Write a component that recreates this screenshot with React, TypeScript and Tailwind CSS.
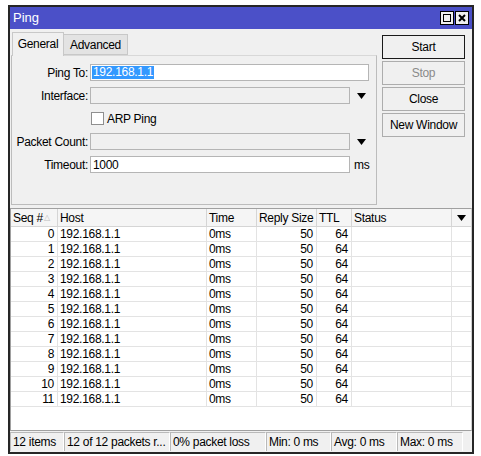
import React from 'react';

const font = { fontFamily: '"Liberation Sans", Arial, sans-serif' };

const rows = Array.from({ length: 12 }, (_, i) => i);

const Triangle = () => (
  <svg width="9" height="6" viewBox="0 0 9 6">
    <path d="M0 0h9L4.5 6z" fill="#000" />
  </svg>
);

const Button: React.FC<{ label: string; disabled?: boolean; primary?: boolean }> = ({ label, disabled, primary }) => (
  <div
    className={`h-[24px] w-[83px] flex items-center justify-center bg-[#f0f0f0] ${
      primary ? 'border border-[#1a1a1a]' : 'border border-[#adadad]'
    } ${disabled ? 'text-[#8a8a8a]' : 'text-black'}`}
  >
    {label}
  </div>
);

const App: React.FC = () => {
  return (
    <div className="w-[481px] h-[456px] bg-white pt-[5px] pl-[8px] text-[12px] tracking-[-0.3px]" style={font}>
      <div className="w-[466px] h-[449px] border-2 border-[#262626] flex flex-col bg-[#f0f0f0]">
        {/* Title bar */}
        <div className="h-[22px] bg-[#4b50c8] flex items-center justify-between pl-[3px] pr-[3px]">
          <span className="text-white text-[13px] tracking-normal">Ping</span>
          <div className="flex gap-[1px]">
            <div className="w-[14px] h-[14px] bg-[#f0f0f0] border border-black flex items-center justify-center">
              <div className="w-[8px] h-[8px] border border-black" />
            </div>
            <div className="w-[14px] h-[14px] bg-[#f0f0f0] border border-black flex items-center justify-center">
              <svg width="8" height="8" viewBox="0 0 8 8">
                <path d="M1 1L7 7M7 1L1 7" stroke="#000" strokeWidth="2" />
              </svg>
            </div>
          </div>
        </div>

        {/* Top section */}
        <div className="flex h-[177px] pt-[2px]">
          <div className="pl-[1px] w-[372px] flex flex-col">
            <div className="flex items-end h-[24px] pl-[1px]">
              <div className="h-[24px] w-[52px] bg-[#f0f0f0] border border-b-0 border-[#c8c8c8] flex items-center justify-center z-10 -mb-[1px] pb-[1px]">
                General
              </div>
              <div className="h-[21px] w-[64px] bg-[#e3e3e3] border border-l-0 border-[#c8c8c8] flex items-center justify-center">
                Advanced
              </div>
            </div>
            <div className="flex-1 border border-[#bcbcbc] border-t-[#d8d8d8] mr-[5px] mb-[1px] pt-[8px] flex flex-col gap-[6px]">
              <div className="flex items-center h-[17px]">
                <div className="w-[78px] text-right pr-[2px]">Ping To:</div>
                <div className="w-[279px] h-[17px] bg-white border border-[#b5b5b5] flex items-center pl-[1px]">
                  <span className="bg-[#3399ff] text-white leading-[13px] px-[1px]">192.168.1.1</span>
                </div>
              </div>
              <div className="flex items-center h-[17px]">
                <div className="w-[78px] text-right pr-[2px]">Interface:</div>
                <div className="w-[260px] h-[17px] bg-[#f0f0f0] border border-[#b5b5b5]" />
                <div className="ml-[7px]"><Triangle /></div>
              </div>
              <div className="flex items-center h-[17px]">
                <div className="w-[79px]" />
                <div className="w-[13px] h-[13px] bg-white border border-[#8f8f8f]" />
                <span className="ml-[3px]">ARP Ping</span>
              </div>
              <div className="flex items-center h-[17px]">
                <div className="w-[78px] text-right pr-[2px]">Packet Count:</div>
                <div className="w-[260px] h-[17px] bg-[#f0f0f0] border border-[#b5b5b5]" />
                <div className="ml-[7px]"><Triangle /></div>
              </div>
              <div className="flex items-center h-[17px]">
                <div className="w-[78px] text-right pr-[2px]">Timeout:</div>
                <div className="w-[260px] h-[17px] bg-white border border-[#b5b5b5] flex items-center pl-[2px]">1000</div>
                <span className="ml-[4px]">ms</span>
              </div>
            </div>
          </div>
          <div className="flex flex-col gap-[2px] pt-[4px]">
            <Button label="Start" primary />
            <Button label="Stop" disabled />
            <Button label="Close" />
            <Button label="New Window" />
          </div>
        </div>

        {/* Table */}
        <div className="mt-[2px] flex-1 bg-white border border-[#a0a0a0] border-r-[#d0d0d0] flex flex-col">
          <div className="flex h-[18px] bg-[#f5f5f5] border-b border-[#d5d5d5]">
            <div className="w-[47px] pl-[2px] border-r border-[#d5d5d5] flex items-center">
              Seq # <span className="text-[#c0c0c0] text-[8px] ml-[1px]">△</span>
            </div>
            <div className="w-[149px] pl-[2px] border-r border-[#d5d5d5] flex items-center">Host</div>
            <div className="w-[50px] pl-[2px] border-r border-[#d5d5d5] flex items-center">Time</div>
            <div className="w-[60px] pl-[2px] border-r border-[#d5d5d5] flex items-center">Reply Size</div>
            <div className="w-[35px] pl-[2px] border-r border-[#d5d5d5] flex items-center">TTL</div>
            <div className="w-[100px] pl-[2px] border-r border-[#d5d5d5] flex items-center">Status</div>
            <div className="flex-1 flex items-center justify-center"><Triangle /></div>
          </div>
          {rows.map((i) => (
            <div key={i} className="flex h-[15px] border-b border-[#e3e3e3] leading-[14px]">
              <div className="w-[47px] pr-[3px] text-right border-r border-[#e3e3e3]">{i}</div>
              <div className="w-[149px] pl-[2px] border-r border-[#e3e3e3]">192.168.1.1</div>
              <div className="w-[50px] pl-[2px] border-r border-[#e3e3e3]">0ms</div>
              <div className="w-[60px] pr-[3px] text-right border-r border-[#e3e3e3]">50</div>
              <div className="w-[35px] pr-[3px] text-right border-r border-[#e3e3e3]">64</div>
              <div className="w-[100px] border-r border-[#e3e3e3]" />
              <div className="flex-1" />
            </div>
          ))}
        </div>

        {/* Status bar */}
        <div className="h-[19px] flex mt-[1px] mb-[1px]">
          {[
            ['12 items', 'w-[54px]'],
            ['12 of 12 packets r...', 'w-[106px]'],
            ['0% packet loss', 'w-[96px]'],
            ['Min: 0 ms', 'w-[65px]'],
            ['Avg: 0 ms', 'w-[66px]'],
            ['Max: 0 ms', 'w-[66px]'],
          ].map(([t, w]) => (
            <div key={t} className={`${w} h-full pl-[2px] flex items-center border-l border-t border-[#b9b9b9] border-r border-r-white whitespace-nowrap overflow-hidden`}>
              {t}
            </div>
          ))}
        </div>
      </div>
    </div>
  );
};

export default App;
